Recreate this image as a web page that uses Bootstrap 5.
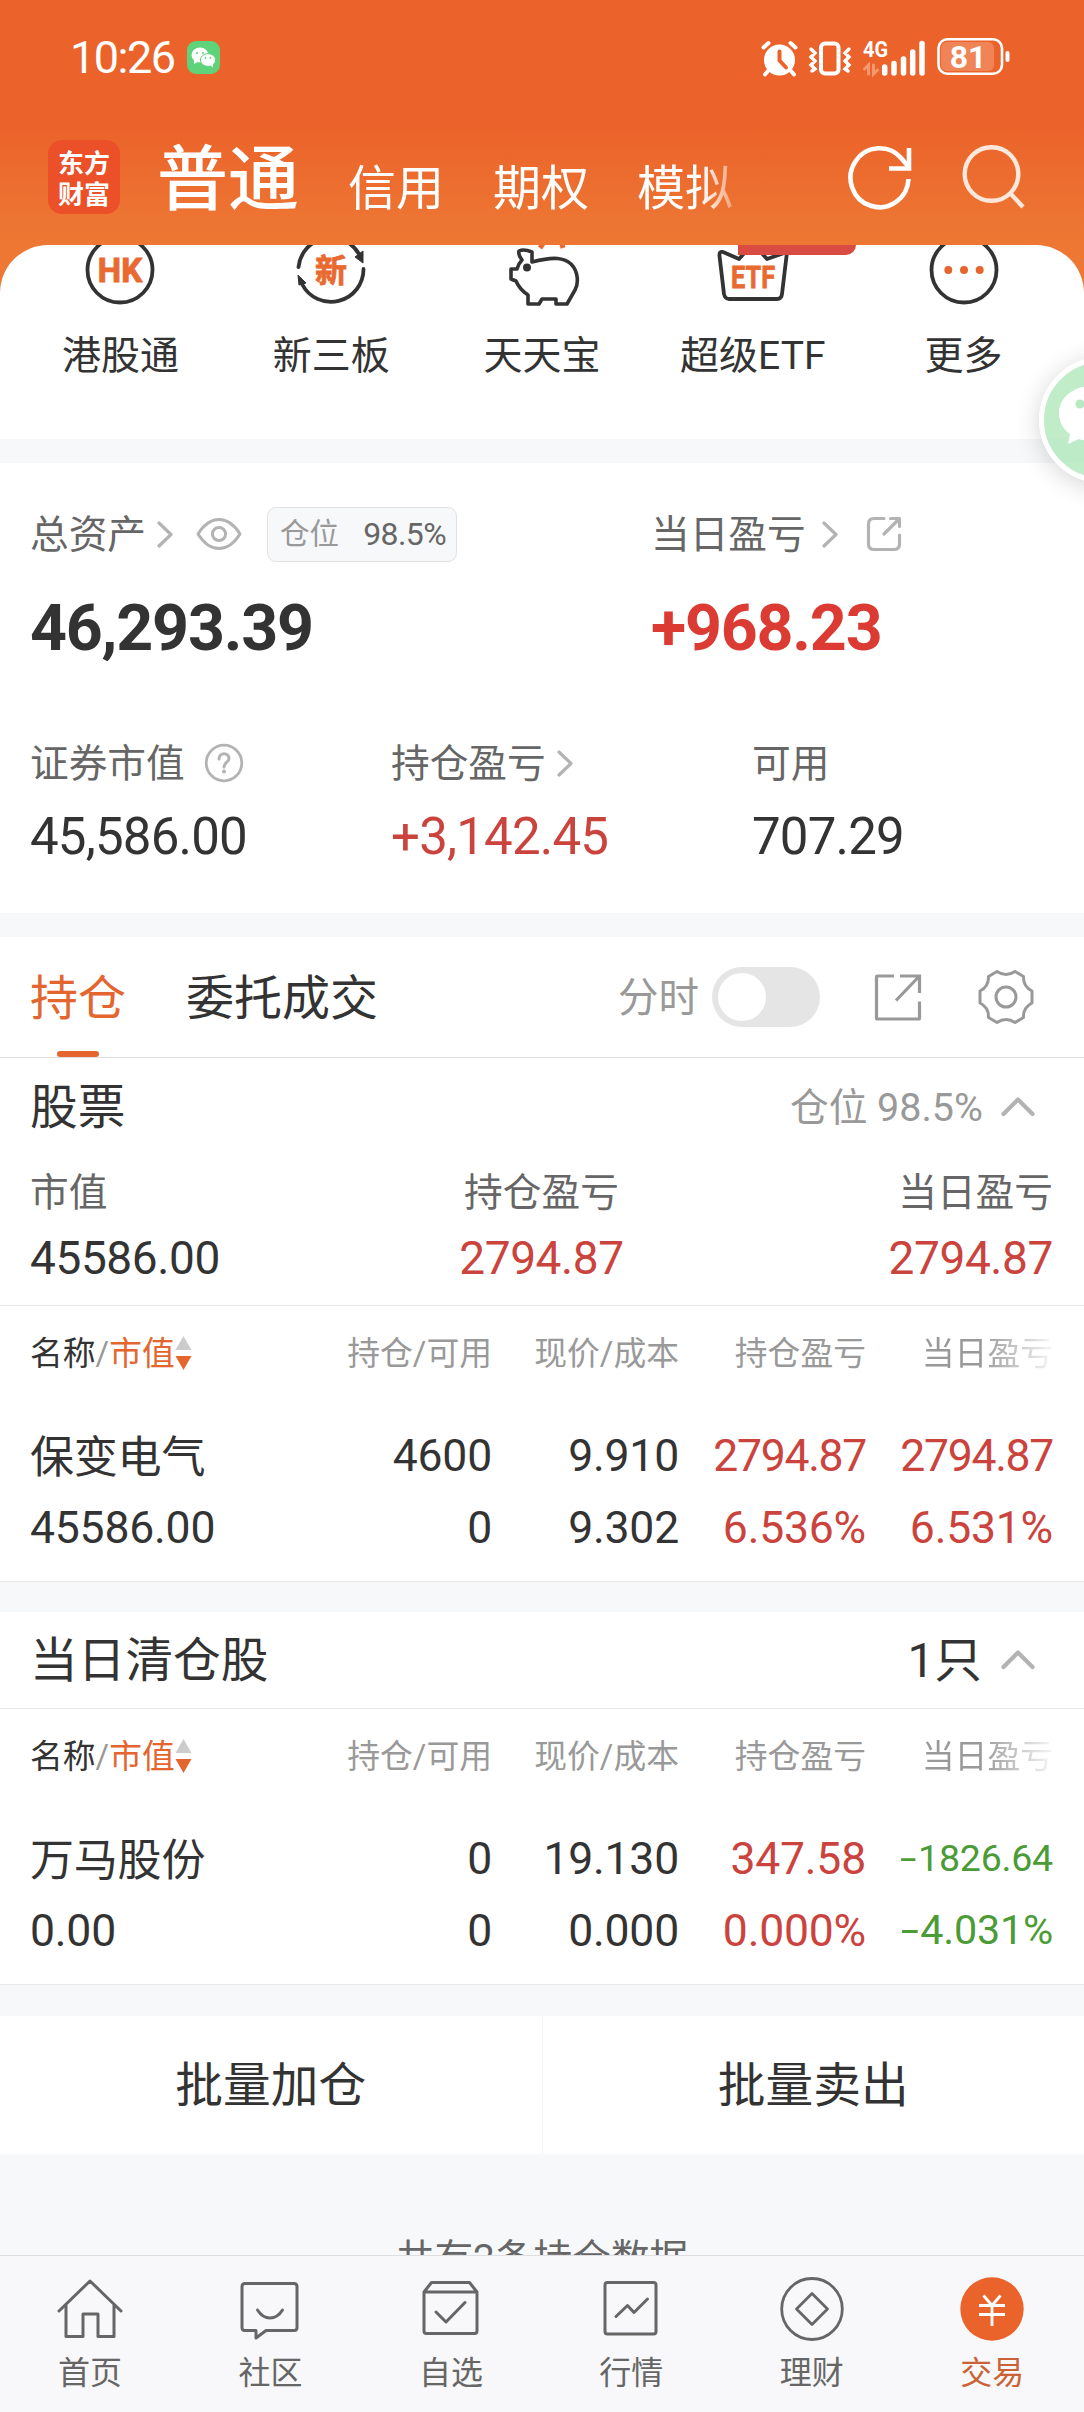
<!DOCTYPE html>
<html lang="zh-CN">
<head>
<meta charset="utf-8">
<meta name="viewport" content="width=device-width, initial-scale=1">
<title>交易</title>
<link href="https://cdn.jsdelivr.net/npm/bootstrap@5.3.0/dist/css/bootstrap.min.css" rel="stylesheet">
<style>
  body { font-family: Roboto, "Noto Sans CJK SC", sans-serif; line-height: 1; color: #333; background: #f7f8fa; -webkit-font-smoothing: antialiased; }
  svg { display: block; flex: none; }
  .phone { width: 1084px; height: 2412px; overflow: hidden; position: relative; }
  .zh { display: inline-block; padding-top: .08em; white-space: nowrap; }
  .ink-2 { color: #666; } .ink-3 { color: #999; } .hot { color: #e4652e; } .up { color: #cb433d; } .down { color: #4b9b37; }
  .topbar { height: 245px; color: #fff; background: linear-gradient(#eb632a 0, #eb632a 128px, #ed7533 222px, #ed7733 245px); }
  .status { height: 114px; padding: 0 74px 0 70px; }
  .clock { font-size: 45px; letter-spacing: -1.5px; width: 117px; }
  .chat-chip { width: 33px; height: 33px; border-radius: 9px; background: #5fd37a; }
  .titles { height: 126px; padding: 0 58px 0 48px; }
  .brand { width: 72px; height: 74px; border-radius: 14px; background: #eb5029; font-family: "Noto Sans CJK SC", sans-serif; font-size: 26px; font-weight: 700; line-height: 31px; text-align: center; padding-top: 6px; }
  .kinds { width: 582px; margin-left: 37px; font-size: 48px; -webkit-mask-image: linear-gradient(90deg, #000 545px, rgba(0,0,0,.3) 578px); mask-image: linear-gradient(90deg, #000 545px, rgba(0,0,0,.3) 578px); }
  .kinds .current { font-size: 71px; }
  .under { background: #ed7733; }
  .shortcuts { height: 194px; border-radius: 48px 48px 0 0; overflow: hidden; padding: 0 15px; position: relative; }
  .shortcuts svg { margin-top: -13px; }
  .shortcuts .zh { font-size: 39px; margin-top: 26px; }
  .shortcuts text { font-weight: 700; fill: #e96a31; text-anchor: middle; }
  .ribbon { position: absolute; left: 738px; top: 0; width: 118px; height: 10px; background: #d94c43; border-radius: 0 0 20px 0; }
  .floater { position: absolute; left: 1039px; top: 357px; width: 126px; height: 126px; border-radius: 50%; border: 5px solid #fff; background: rgba(171,231,182,.75); box-shadow: 0 4px 24px rgba(0,0,0,.17); z-index: 2; }
  .strip { background: #f7f8fa; }
  .assets { height: 450px; padding: 44px 30px 0; }
  .assets .name { font-size: 38.7px; color: #666; }
  .line-a { height: 54px; }
  .col-left { width: 621px; flex: none; }
  .third { width: 361px; flex: none; }
  .share-pill { height: 55px; width: 190px; border: 1px solid #e2e2e4; border-radius: 9px; background: #f7f8fa; padding: 0 10px 0 12px; }
  .total { font-size: 64.5px; font-weight: 700; letter-spacing: -1.2px; height: 66px; margin-top: 34px; }
  .total .gain { color: #dc3b33; }
  .line-b { height: 40px; margin-top: 82px; }
  .line-c { height: 52px; margin-top: 27px; font-size: 51px; letter-spacing: -.8px; }
  .tabs-row { height: 121px; padding: 0 50px 0 30px; border-bottom: 1px solid #dedede; font-size: 48px; }
  .tab-on { height: 120px; position: relative; }
  .tab-on::after { content: ""; position: absolute; left: 27px; bottom: 0; width: 42px; height: 6px; border-radius: 3px; background: #e4652e; }
  .switch-off { width: 108px; height: 60px; border-radius: 30px; background: #e5e5e5; padding: 6px; }
  .switch-off i { display: block; width: 48px; height: 48px; border-radius: 50%; background: #fff; }
  .sec-head { padding: 0 48px 0 30px; font-size: 47.7px; }
  .sec-head svg { margin-bottom: 2px; }
  .sum { padding: 0 31px 0 30px; }
  .sum .name { font-size: 38.7px; color: #666; }
  .sum .val { font-size: 46px; letter-spacing: -.4px; margin-top: 22px; }
  .rule { border-top: 1px solid #e8e8e8; }
  .cells { display: grid; grid-template-columns: 1fr 188px 187px 187px 187px; padding: 0 31px 0 30px; align-items: center; white-space: nowrap; }
  .cells > :not(:first-child) { text-align: right; }
  .heads { height: 97px; font-size: 32.8px; color: #999; padding-bottom: 2px; }
  .fade-end { -webkit-mask-image: linear-gradient(90deg, #000 115px, rgba(0,0,0,.15) 182px); mask-image: linear-gradient(90deg, #000 115px, rgba(0,0,0,.15) 182px); }
  .vals { height: 72px; font-size: 44.5px; letter-spacing: -.2px; }
  .tight { letter-spacing: -1.3px; padding-right: 0; }
  .dash { display: inline-block; transform: scaleX(1.6); margin-right: .12em; }
  .actions { height: 138px; font-size: 47.7px; }
  .actions > * { flex: 1; }
  .actions > * + * { border-left: 1px solid #f3f3f5; }
  .tail-note { font-size: 38.7px; color: #666; padding-top: 83px; }
  .bottom-nav { height: 157px; background: #f8f8fa; border-top: 1px solid #dfdfe1; position: relative; color: #666; font-size: 32px; }
  .bottom-nav > div { width: 180.6px; padding-top: 20px; margin-left: -.2px; }
  .bottom-nav .zh { margin-top: 12px; }
  .bottom-nav .on { color: #cb6235; }
</style>
</head>
<body>
<div class="phone d-flex flex-column">
  <header class="topbar flex-shrink-0">
    <div class="status d-flex align-items-center">
      <span class="clock">10:26</span>
      <span class="chat-chip d-flex align-items-center justify-content-center">
        <svg width="25" height="21" viewBox="0 0 25 21"><g fill="#fff"><ellipse cx="9" cy="8" rx="8.500" ry="7.500"/><path d="M3 13l0 4 5-3z"/><ellipse cx="17" cy="13" rx="7.600" ry="6.400" stroke="#5fd37a"/><path d="M19 18l3 2.500v-4z"/></g><g fill="#5fd37a"><circle cx="6" cy="6" r="1"/><circle cx="12" cy="6" r="1"/><circle cx="14.500" cy="11" r=".9"/><circle cx="19.500" cy="11" r=".9"/></g></svg>
      </span>
      <svg class="ms-auto" width="250" height="42" viewBox="760 35 250 42" fill="none" stroke="#fff" stroke-linecap="round">
        <circle cx="779.500" cy="59" r="15.500" fill="#fff" stroke="none"/>
        <path d="M763.500 46.500l5-4.500M795.500 46.500l-5-4.500M768 70l-3 3.500M791 70l3 3.500" stroke-width="4"/>
        <path d="M779.500 50.500v9l6.500 7" stroke="#eb632a" stroke-width="4"/>
        <rect x="821" y="42.500" width="17.500" height="30" rx="4" stroke-width="4"/>
        <path d="M811 48l4 4-4 4 4 4-4 4 4 4-3 2M849 48l-4 4 4 4-4 4 4 4-4 4 3 2" stroke-width="3.400"/>
        <text x="863" y="56" font-size="22" font-weight="700" fill="#fff" stroke="none" textLength="25" lengthAdjust="spacingAndGlyphs">4G</text>
        <path d="M868.500 73v-9l-4 4M873.500 64v9l4-4" stroke="#f7976f" stroke-width="3"/>
        <path d="M884.700 66v6M894 62.500v9.500M903.500 58v14M912.700 51v21M922 42.500v29.500" stroke-width="5.500"/>
        <rect x="941" y="41" width="53" height="29" rx="6" fill="#f08456" stroke="none"/>
        <rect x="938.500" y="38.200" width="63.500" height="34.500" rx="9" stroke-width="2.600"/>
        <path d="M1007.500 52v7" stroke-width="4"/>
        <text x="968" y="67" font-size="32" font-weight="700" fill="#fff" stroke="none" text-anchor="middle">81</text>
      </svg>
    </div>
    <div class="titles d-flex align-items-center">
      <div class="brand">东方<br>财富</div>
      <div class="kinds d-flex align-items-center">
        <span class="zh current" style="font-weight:500">普通</span>
        <span class="zh" style="margin:20px 0 0 49px">信用</span>
        <span class="zh" style="margin:20px 0 0 49px">期权</span>
        <span class="zh" style="margin:20px 0 0 48px">模拟</span>
      </div>
      <svg class="ms-auto" width="66" height="68" viewBox="0 0 66 68" fill="none" stroke="#fff" stroke-width="4.600"><path d="M60.500 36A29 29.500 0 1 1 53.500 15.500L60 23"/><path d="M61 5v20.500H41"/></svg>
      <svg style="margin-left:46px" width="66" height="68" viewBox="0 0 66 68" fill="none" stroke="#ffe8db" stroke-width="4.400"><circle cx="31.500" cy="31" r="26.800"/><path d="M50 50l13 14"/></svg>
    </div>
  </header>

  <main class="flex-grow-1 overflow-hidden" style="min-height:0">
    <div class="under">
      <div class="shortcuts bg-white d-flex">
        <div class="d-flex flex-column align-items-center flex-fill w-100"><svg width="76" height="76" viewBox="0 0 76 76"><circle cx="38" cy="38" r="32.500" fill="none" stroke="#333" stroke-width="3.800"/><text x="38" y="49.500" font-size="33" stroke="#e96a31" stroke-width="1" stroke-linejoin="round">HK</text></svg><span class="zh">港股通</span></div>
        <div class="d-flex flex-column align-items-center flex-fill w-100"><svg width="76" height="76" viewBox="0 0 76 76"><path d="M5.500 35A32.500 32.500 0 0 1 66 22M70.500 37A32.500 32.500 0 0 1 9 52" fill="none" stroke="#333" stroke-width="3.800" stroke-linecap="round"/><path d="M70 19v12l-8-6zM5 43l8 8-7 2z" fill="#333" stroke="#333" stroke-linejoin="round"/><text x="38" y="49.500" font-size="32" stroke="#e96a31" stroke-width=".8">新</text></svg><span class="zh">新三板</span></div>
        <div class="d-flex flex-column align-items-center flex-fill w-100"><svg width="76" height="76" viewBox="0 0 76 76" fill="none" stroke="#333" stroke-width="3.600" stroke-linejoin="round"><path d="M28 20c-5-2-9-3-13-1-1 4 1 6 3 9-3 3-4 5-5 9H7v10l5 2c3 7 6 10 12 14v9h11l3-5h14v5h11l8-14c4-7 3-19-4-26-7-6-16-8-39-2z"/><circle cx="23" cy="35.500" r="2.200" fill="#333"/><path d="M36 16l4-6M59 16l-2-7" stroke="#e96a31" stroke-width="5"/></svg><span class="zh">天天宝</span></div>
        <div class="d-flex flex-column align-items-center flex-fill w-100"><svg width="76" height="76" viewBox="0 0 76 76"><path d="M8 20l16 7 9-10h10l9 10 20-7-5 42q-.5 5-5 5H14q-4 0-5-5L4.500 24q-.5-5 3.500-4z" fill="none" stroke="#333" stroke-width="3.800" stroke-linejoin="round"/><text x="38" y="55.500" font-size="32" textLength="44" lengthAdjust="spacingAndGlyphs" stroke="#e96a31" stroke-width=".8">ETF</text></svg><span class="zh">超级ETF</span></div>
        <div class="d-flex flex-column align-items-center flex-fill w-100"><svg width="76" height="76" viewBox="0 0 76 76"><circle cx="38" cy="38" r="32.500" fill="none" stroke="#333" stroke-width="3.800"/><g fill="#e4652e"><circle cx="22.300" cy="38" r="4"/><circle cx="38" cy="38" r="4"/><circle cx="53.700" cy="38" r="4"/></g></svg><span class="zh">更多</span></div>
        <span class="ribbon"></span>
      </div>
    </div>
    <div class="strip" style="height:24px"></div>

    <section class="assets bg-white">
      <div class="line-a d-flex align-items-center">
        <div class="col-left d-flex align-items-center">
          <span class="zh name">总资产</span>
          <svg style="margin-left:10px" width="18" height="28" viewBox="0 0 18 28" fill="none" stroke="#b3b3b3" stroke-width="3.200" stroke-linecap="round" stroke-linejoin="round"><path d="M3 3l12 11.500L3 26"/></svg>
          <svg style="margin-left:22px" width="46" height="34" viewBox="0 0 46 34" fill="none" stroke="#b3b3b3" stroke-width="3"><path d="M2 17Q11 2.500 23 2.500T44 17Q35 31.500 23 31.500T2 17z" stroke-linejoin="round"/><circle cx="23" cy="17" r="6.600"/></svg>
          <div class="share-pill d-flex align-items-center justify-content-between" style="margin-left:25px"><span class="zh ink-3" style="font-size:29.500px">仓位</span><span class="ink-2" style="font-size:32px;letter-spacing:-.6px">98.5%</span></div>
        </div>
        <span class="zh name">当日盈亏</span>
        <svg style="margin-left:15px" width="18" height="28" viewBox="0 0 18 28" fill="none" stroke="#b3b3b3" stroke-width="3.200" stroke-linecap="round" stroke-linejoin="round"><path d="M3 3l12 11.500L3 26"/></svg>
        <svg style="margin-left:27px" width="36" height="36" viewBox="0 0 36 36" fill="none" stroke="#b3b3b3" stroke-width="3.200" stroke-linecap="round" stroke-linejoin="round"><path d="M18 2.500H8Q2.500 2.500 2.500 8v20q0 5.500 5.500 5.500h20q5.500 0 5.500-5.500V19M24.500 2.500h9v8M33 3L18 18"/></svg>
      </div>
      <div class="total d-flex align-items-center"><span class="col-left">46,293.39</span><span class="gain">+968.23</span></div>
      <div class="line-b d-flex align-items-center">
        <div class="third d-flex align-items-center"><span class="zh name">证券市值</span>
          <svg style="margin-left:19px" width="40" height="40" viewBox="0 0 40 40" fill="none" stroke="#b3b3b3"><circle cx="20" cy="20" r="17.800" stroke-width="2.800"/><path d="M15 16c0-7 10-7 10-.5 0 4-5 4-5 8.500" stroke-width="3" stroke-linecap="round"/><circle cx="20" cy="28.500" r="2" fill="#b3b3b3" stroke="none"/></svg></div>
        <div class="third d-flex align-items-center"><span class="zh name">持仓盈亏</span>
          <svg style="margin-left:10px" width="18" height="28" viewBox="0 0 18 28" fill="none" stroke="#b3b3b3" stroke-width="3.200" stroke-linecap="round" stroke-linejoin="round"><path d="M3 3l12 11.500L3 26"/></svg></div>
        <span class="zh name">可用</span>
      </div>
      <div class="line-c d-flex align-items-center"><span class="third">45,586.00</span><span class="third up">+3,142.45</span><span>707.29</span></div>
    </section>
    <div class="strip" style="height:24px"></div>

    <section class="bg-white">
      <div class="tabs-row d-flex align-items-center">
        <div class="tab-on d-flex align-items-center hot"><span class="zh">持仓</span></div>
        <span class="zh" style="margin-left:60px">委托成交</span>
        <span class="zh ink-3 ms-auto" style="font-size:40.500px">分时</span>
        <div class="switch-off" style="margin-left:13px"><i></i></div>
        <svg style="margin-left:54px" width="48" height="48" viewBox="0 0 48 48" fill="none" stroke="#999" stroke-width="3.200"><path d="M20 3H3.500Q2.500 3 2.500 4v41q0 1 1 1h41q1 0 1-1V28.500M26 3h19.500v17M45 3.500L22 27.500"/></svg>
        <svg style="margin-left:56px" width="56" height="56" viewBox="0 0 56 56" fill="none" stroke="#999" stroke-width="3" stroke-linejoin="round"><path d="M19 2.500q9 6 18 0l8.500 5q-.5 10 8.500 14.500v12q-9 4.500-8.500 14.500l-8.500 5q-9-6-18 0l-8.500-5q.5-10-8.500-14.500v-12q9-4.500 8.500-14.500z"/><circle cx="28" cy="28" r="10"/></svg>
      </div>
      <div class="sec-head d-flex align-items-center" style="height:97px">
        <span class="zh">股票</span>
        <span class="ms-auto ink-3" style="font-size:38.700px"><span class="zh">仓位</span> <span style="font-size:39.500px">98.5%</span></span>
        <svg style="margin-left:17px" width="36" height="22" viewBox="0 0 36 22" fill="none" stroke="#b3b3b3" stroke-width="4.200" stroke-linecap="round" stroke-linejoin="round"><path d="M3.500 19L18 4.500 32.500 19"/></svg>
      </div>
      <div class="sum d-flex justify-content-between" style="height:150px;padding-top:16px">
        <div style="width:190px"><div class="zh name">市值</div><div class="val">45586.00</div></div>
        <div class="text-center"><div class="zh name">持仓盈亏</div><div class="val up">2794.87</div></div>
        <div class="text-end" style="width:190px"><div class="zh name">当日盈亏</div><div class="val up">2794.87</div></div>
      </div>
      <div class="cells heads rule">
        <div class="d-flex align-items-center"><span class="zh"><span style="color:#333">名称</span>/<span class="hot">市值</span></span><svg width="17" height="36" viewBox="0 0 17 36"><path d="M8.500 1l8 14H.5z" fill="#ccc"/><path d="M8.500 35l8-14H.5z" fill="#e4652e"/></svg></div>
        <span><span class="zh">持仓/可用</span></span><span><span class="zh">现价/成本</span></span><span><span class="zh">持仓盈亏</span></span><span class="fade-end"><span class="zh">当日盈亏</span></span>
      </div>
      <div class="cells vals" style="margin-top:18px"><span><span class="zh" style="font-size:44px">保变电气</span></span><span>4600</span><span>9.910</span><span class="up tight">2794.87</span><span class="up tight">2794.87</span></div>
      <div class="cells vals"><span>45586.00</span><span>0</span><span>9.302</span><span class="up">6.536%</span><span class="up">6.531%</span></div>
      <div style="height:17px"></div>
    </section>
    <div class="strip rule" style="height:31px"></div>

    <section class="bg-white">
      <div class="sec-head d-flex align-items-center" style="height:96px"><span class="zh">当日清仓股</span><span class="zh ms-auto">1只</span>
        <svg style="margin-left:18px" width="36" height="22" viewBox="0 0 36 22" fill="none" stroke="#b3b3b3" stroke-width="4.200" stroke-linecap="round" stroke-linejoin="round"><path d="M3.500 19L18 4.500 32.500 19"/></svg></div>
      <div class="cells heads rule">
        <div class="d-flex align-items-center"><span class="zh"><span style="color:#333">名称</span>/<span class="hot">市值</span></span><svg width="17" height="36" viewBox="0 0 17 36"><path d="M8.500 1l8 14H.5z" fill="#ccc"/><path d="M8.500 35l8-14H.5z" fill="#e4652e"/></svg></div>
        <span><span class="zh">持仓/可用</span></span><span><span class="zh">现价/成本</span></span><span><span class="zh">持仓盈亏</span></span><span class="fade-end"><span class="zh">当日盈亏</span></span>
      </div>
      <div class="cells vals" style="margin-top:18px"><span><span class="zh" style="font-size:44px">万马股份</span></span><span>0</span><span>19.130</span><span class="up">347.58</span><span class="down" style="font-size:37.500px"><span class="dash">-</span>1826.64</span></div>
      <div class="cells vals"><span>0.00</span><span>0</span><span>0.000</span><span class="up">0.000%</span><span class="down" style="font-size:41.300px"><span class="dash">-</span>4.031%</span></div>
      <div style="height:17px"></div>
    </section>
    <div class="strip rule" style="height:32px"></div>

    <div class="actions bg-white d-flex text-center">
      <div class="d-flex align-items-center justify-content-center"><span class="zh">批量加仓</span></div>
      <div class="d-flex align-items-center justify-content-center"><span class="zh">批量卖出</span></div>
    </div>
    <div class="tail-note text-center"><span class="zh">共有2条持仓数据</span></div>
  </main>

  <nav class="bottom-nav flex-shrink-0 d-flex">
    <div class="d-flex flex-column align-items-center"><svg width="66" height="66" viewBox="0 0 66 66" fill="none" stroke="#666" stroke-width="3" stroke-linejoin="round" stroke-linecap="round"><path d="M2 35L33 5l31 30M9 29v31.500h17V38h15v22.500h16V29"/></svg><span class="zh">首页</span></div>
    <div class="d-flex flex-column align-items-center"><svg width="66" height="66" viewBox="0 0 66 66" fill="none" stroke="#666" stroke-width="3" stroke-linejoin="round" stroke-linecap="round"><path d="M7 7.500h49q3 0 3 3v41q0 3-3 3H28L18 62v-7.500H7q-3 0-3-3v-41q0-3 3-3z"/><path d="M19.500 34q5 8 12.500 8t12.500-8"/></svg><span class="zh">社区</span></div>
    <div class="d-flex flex-column align-items-center"><svg width="66" height="66" viewBox="0 0 66 66" fill="none" stroke="#666" stroke-width="3" stroke-linejoin="round" stroke-linecap="round"><path d="M6 16l7.500-9.500h38L59 16v39q0 2.500-2.500 2.500h-48Q6 57.500 6 55zM6 16h53M18 36l10 10 19-19.500"/></svg><span class="zh">自选</span></div>
    <div class="d-flex flex-column align-items-center"><svg width="66" height="66" viewBox="0 0 66 66" fill="none" stroke="#666" stroke-width="3" stroke-linejoin="round" stroke-linecap="round"><rect x="7" y="6.500" width="51" height="51.500" rx="2.500"/><path d="M18 40.500l11.500-11 6.500 7L49.500 23"/></svg><span class="zh">行情</span></div>
    <div class="d-flex flex-column align-items-center"><svg width="66" height="66" viewBox="0 0 66 66" fill="none" stroke="#666" stroke-width="2.800" stroke-linejoin="round"><ellipse cx="33" cy="33" rx="30.300" ry="30.500"/><path d="M33 17.500l15.500 15.500L33 48.500 17.500 33z"/></svg><span class="zh">理财</span></div>
    <div class="d-flex flex-column align-items-center on"><svg width="66" height="66" viewBox="0 0 66 66" fill="none" stroke="#fff" stroke-width="2.800"><circle cx="33" cy="33" r="31.700" fill="#ea632a" stroke="none"/><path d="M24.500 19.500l8.500 10 8.500-10M20 29.500h26M20 38.500h26M33 29.500V50"/></svg><span class="zh">交易</span></div>
  </nav>

  <div class="floater"><svg width="116" height="116" viewBox="0 0 116 116" fill="#fff"><path d="M47 24c-18 0-32 12-32 27 0 9 4 16 11 21l-2 10 11-5c5 2 14 2 20 1z"/><circle cx="36" cy="42" r="4.500" fill="#b8e9c1"/></svg></div>
</div>
<script src="https://cdn.jsdelivr.net/npm/bootstrap@5.3.0/dist/js/bootstrap.bundle.min.js"></script>
</body>
</html>
